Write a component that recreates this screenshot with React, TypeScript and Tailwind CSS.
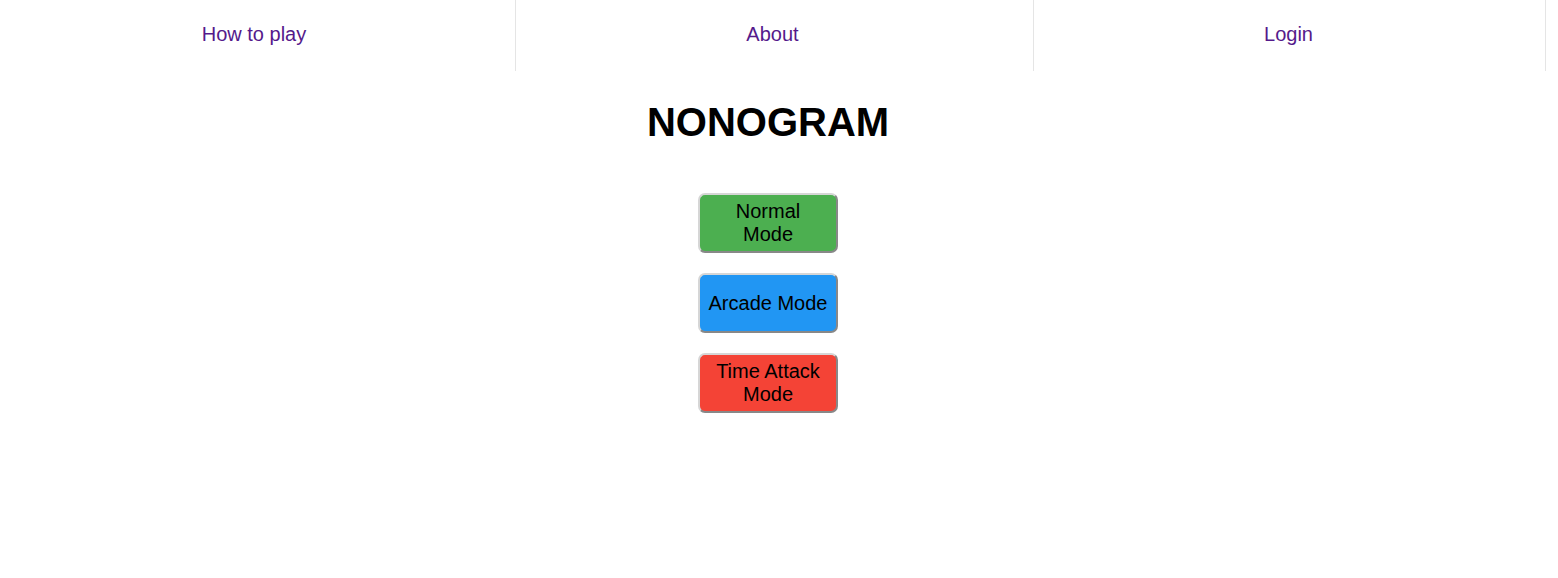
export default function App() {
  const font = { fontFamily: '"Liberation Sans", Arial, sans-serif' };
  return (
    <div className="min-h-[578px] bg-white" style={font}>
      {/* Top nav */}
      <nav className="flex h-[71px]">
        <a href="#" className="flex w-[516px] items-center justify-center border-r border-[#e5e5e5] pr-[7px] pb-[4px] text-[20px] text-[#551a8b]">
          How to play
        </a>
        <a href="#" className="flex w-[518px] items-center justify-center border-r border-[#e5e5e5] pr-[4px] pb-[4px] text-[20px] text-[#551a8b]">
          About
        </a>
        <a href="#" className="flex w-[512px] items-center justify-center border-r border-[#e5e5e5] pr-[2px] pb-[4px] text-[20px] text-[#551a8b]">
          Login
        </a>
      </nav>

      <main className="flex w-[1536px] flex-col items-center">
        <h1 className="mt-[28px] text-[40px] leading-[46px] font-bold text-black">NONOGRAM</h1>

        <div className="mt-[48px] flex flex-col items-center gap-[20px]">
          <button className="flex h-[60px] w-[140px] items-center justify-center rounded-[7px] border-2 border-t-[#d6d6d6] border-l-[#d6d6d6] border-r-[#888888] border-b-[#888888] bg-[#4caf50] text-center text-[20px] leading-[23px] text-black">
            Normal
            <br />
            Mode
          </button>
          <button className="flex h-[60px] w-[140px] items-center justify-center rounded-[7px] border-2 border-t-[#d6d6d6] border-l-[#d6d6d6] border-r-[#888888] border-b-[#888888] bg-[#2196f3] text-center text-[20px] leading-[23px] whitespace-nowrap text-black">
            Arcade Mode
          </button>
          <button className="flex h-[60px] w-[140px] items-center justify-center rounded-[7px] border-2 border-t-[#d6d6d6] border-l-[#d6d6d6] border-r-[#888888] border-b-[#888888] bg-[#f44336] text-center text-[20px] leading-[23px] text-black">
            Time Attack
            <br />
            Mode
          </button>
        </div>
      </main>
    </div>
  );
}
